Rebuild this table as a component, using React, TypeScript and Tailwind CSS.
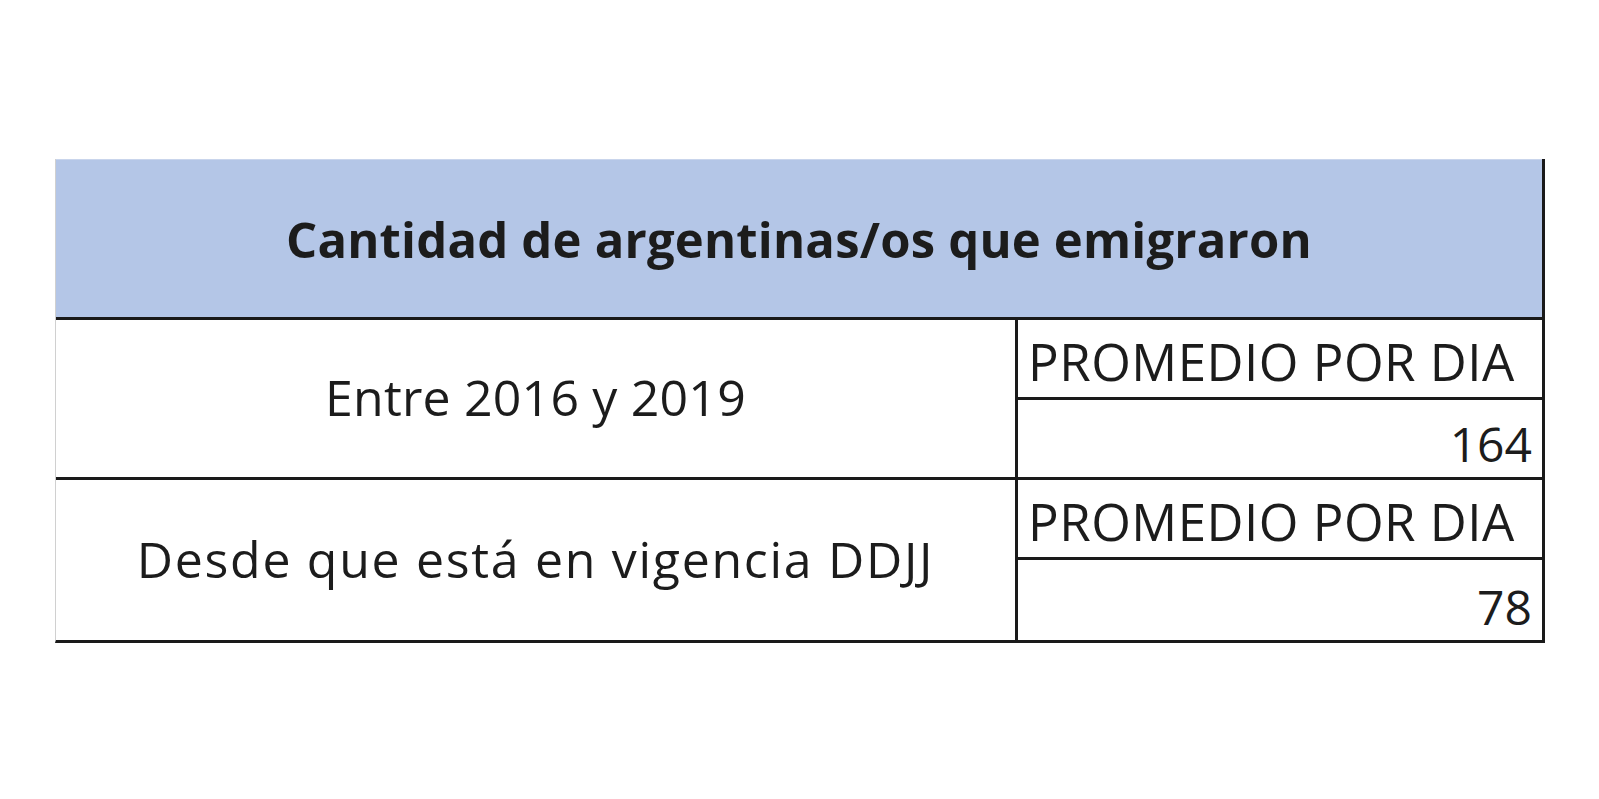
import React from "react";

export default function App() {
  const font = { fontFamily: "'Open Sans', Lato, sans-serif" };
  const rows = [
    { label: "Entre 2016 y 2019", value: "164", cls: "text-[50px] tracking-[0.2px]" },
    { label: "Desde que está en vigencia DDJJ", value: "78", cls: "text-[50px] tracking-[1.7px]" },
  ];
  return (
    <div className="w-[1599px] h-[799px] bg-white" style={font}>
      <div className="pt-[159px] pl-[55px]">
        <div className="w-[1490px] border-l border-l-[#d0d0d0] border-r-[3px] border-r-[#1a1a1a] border-b-[3px] border-b-[#1a1a1a] text-[#1c1c1c]">
          <div className="h-[161px] bg-[#b4c6e7] border-t border-t-[#c9d5ec] border-b-[3px] border-b-[#1a1a1a] flex items-center justify-center">
            <span className="text-[49px] font-bold tracking-[0.2px] pt-[2px]">Cantidad de argentinas/os que emigraron</span>
          </div>
          {rows.map((r, i) => (
            <div key={i} className={"flex h-[160px] " + (i === 0 ? "border-b-[3px] border-b-[#1a1a1a]" : "")}>
              <div className="w-[962px] flex items-center justify-center border-r-[3px] border-r-[#1a1a1a]">
                <span className={"pb-[2px] " + r.cls}>{r.label}</span>
              </div>
              <div className="flex-1 flex flex-col">
                <div className="h-[80px] border-b-[3px] border-b-[#1a1a1a] flex items-center pl-[10px] pt-[6px] text-[51px] tracking-[0.5px] whitespace-nowrap">
                  PROMEDIO POR DIA
                </div>
                <div className="flex-1 flex items-end justify-end pr-[10px] pb-[1px] text-[48px] leading-[64px]">
                  {r.value}
                </div>
              </div>
            </div>
          ))}
        </div>
      </div>
    </div>
  );
}
